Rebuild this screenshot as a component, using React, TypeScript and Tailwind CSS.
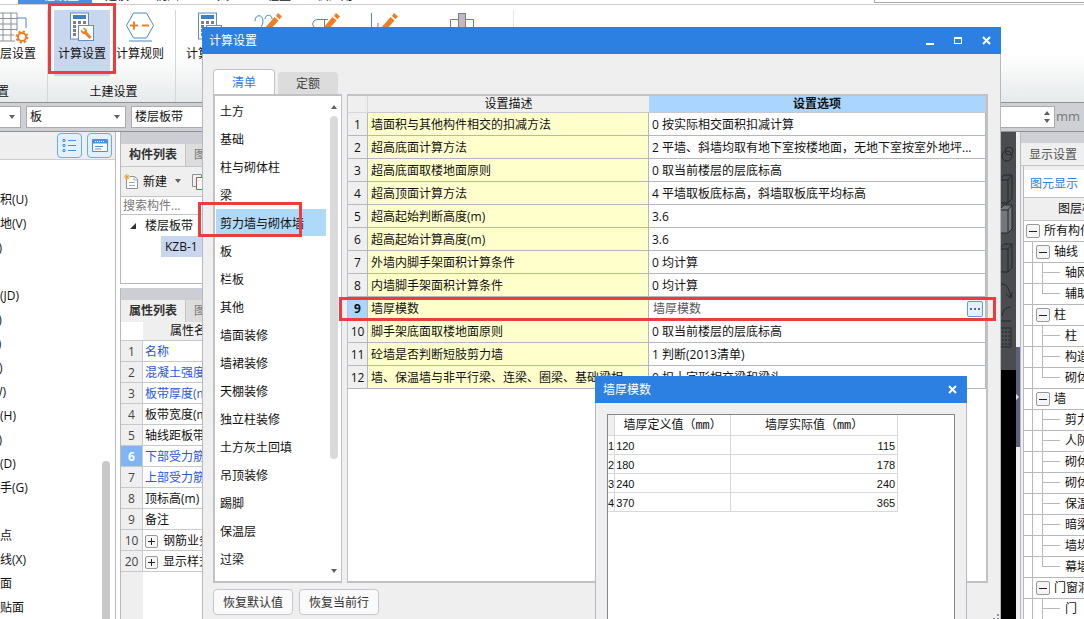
import React from 'react';

const RIBBON_TABS = ['工程设置', '建模', '视图', '工具', '工程量', '云应用'];

const COMMANDS = [
  '面积(U)', '场地(V)', '(Z)', '', '桥(JD)', '(T)', '(L)', '(C)', '(W)', '架(H)',
  '(Z)', '盖(D)', '扶手(G)', '', '＿点', '＿线(X)', '＿面', '＿贴面',
];

const PROPERTIES = [
  { no: 1, name: '名称', blue: true },
  { no: 2, name: '混凝土强度等级', blue: true },
  { no: 3, name: '板带厚度(mm)', blue: true },
  { no: 4, name: '板带宽度(mm)' },
  { no: 5, name: '轴线距板带左边线' },
  { no: 6, name: '下部受力筋', blue: true, active: true },
  { no: 7, name: '上部受力筋', blue: true },
  { no: 8, name: '顶标高(m)' },
  { no: 9, name: '备注' },
  { no: 10, name: '钢筋业务属性', group: true },
  { no: 20, name: '显示样式', group: true },
];

const LAYERS = [
  { level: 0, name: '所有构件' },
  { level: 1, name: '轴线' },
  { level: 2, name: '轴网' },
  { level: 2, name: '辅助轴线', last: true },
  { level: 1, name: '柱' },
  { level: 2, name: '柱' },
  { level: 2, name: '构造柱' },
  { level: 2, name: '砌体柱', last: true },
  { level: 1, name: '墙' },
  { level: 2, name: '剪力墙' },
  { level: 2, name: '人防门框墙' },
  { level: 2, name: '砌体墙' },
  { level: 2, name: '砌体加筋' },
  { level: 2, name: '保温墙' },
  { level: 2, name: '暗梁' },
  { level: 2, name: '墙垛' },
  { level: 2, name: '幕墙', last: true },
  { level: 1, name: '门窗洞' },
  { level: 2, name: '门' },
];

const CATEGORIES = [
  '土方', '基础', '柱与砌体柱', '梁', '剪力墙与砌体墙', '板', '栏板', '其他', '墙面装修',
  '墙裙装修', '天棚装修', '独立柱装修', '土方灰土回填', '吊顶装修', '踢脚', '保温层', '过梁',
];

const SETTINGS = [
  ['墙面积与其他构件相交的扣减方法', '0 按实际相交面积扣减计算'],
  ['超高底面计算方法', '2 平墙、斜墙均取有地下室按楼地面，无地下室按室外地坪...'],
  ['超高底面取楼地面原则', '0 取当前楼层的层底标高'],
  ['超高顶面计算方法', '4 平墙取板底标高，斜墙取板底平均标高'],
  ['超高起始判断高度(m)', '3.6'],
  ['超高起始计算高度(m)', '3.6'],
  ['外墙内脚手架面积计算条件', '0 均计算'],
  ['内墙脚手架面积计算条件', '0 均计算'],
  ['墙厚模数', '墙厚模数'],
  ['脚手架底面取楼地面原则', '0 取当前楼层的层底标高'],
  ['砼墙是否判断短肢剪力墙', '1 判断(2013清单)'],
  ['墙、保温墙与非平行梁、连梁、圈梁、基础梁相', '0 扣十字形相交梁和梁头'],
];

const MODULES = [[120, 115], [180, 178], [240, 240], [370, 365]];

const Calculator = ({ wrench = false }) => (
  <svg width="26" height="30" viewBox="0 0 26 30" fill="none">
    <rect x="1.5" y="1" width="18" height="26" fill="#fff" stroke="#5b8fca" />
    <rect x="4" y="3" width="13" height="4" fill="#3f7fc6" />
    <g fill="#7c7f84">
      {[9, 13, 17, 21].map(y => [4, 9, 14].map(x => (
        <rect key={`${x}-${y}`} x={x} y={y} width="3" height="3" />
      )))}
    </g>
    <rect x="9.5" y="13.5" width="15" height="15" fill="#fff" stroke="#5b8fca" />
    {wrench && (
      <>
        <path d="m16 20 5.500 6" stroke="#ee8023" strokeWidth="3" />
        <path d="M12 17.500 14.500 20l1.500-1.500L13.700 16c2.500-.5 4.600 1.400 4.300 3.800-.5 2.200-3 3-4.600 1.800-1.300-1-1.800-2.500-1.400-4.100z" fill="#ee8023" />
      </>
    )}
  </svg>
);

const GridGear = () => (
  <svg width="34" height="32" viewBox="0 0 34 32" fill="none">
    <path d="M0 1h22v28H0M0 6.500h22M0 12h22M0 17.500h22M0 23h22M8 1v28M16 1v28" stroke="#8b9096" />
    <path d="M22 6h9v10" stroke="#4a86c8" />
    <circle cx="27" cy="25" r="8" fill="#fff" />
    <circle cx="27" cy="25" r="4" stroke="#ee8023" strokeWidth="2" />
    <circle cx="27" cy="25" r="5.500" stroke="#ee8023" strokeWidth="2" strokeDasharray="2.200 2.120" />
  </svg>
);

const RuleHexagon = () => (
  <svg width="30" height="30" viewBox="0 0 30 30" fill="none">
    <path d="M8.500 1h13l7 12.500-7 12.500h-13L1.500 13.500z" stroke="#4a86c8" />
    <path d="M5 13.500h8M9 9.500v8M17 13.500h7" stroke="#ee8023" strokeWidth="2" />
    <path d="M4 29h23" stroke="#4a86c8" />
  </svg>
);

const Pencil = ({ d }: { d: string }) => (
  <svg width="32" height="30" viewBox="0 0 32 30" fill="none">
    <path d={d} stroke="#4a86c8" />
    <path d="M13 16 22.500 5l4 3.500L18 18l-7 2z" fill="#ee8023" />
    <path d="m24 4 2-3 4 3.500L27.500 7.200z" fill="#ee8023" />
  </svg>
);

const ColumnIcon = () => (
  <svg width="26" height="30" viewBox="0 0 26 30" fill="none">
    <path d="M1.500 24V7.500h23V24" stroke="#4a86c8" />
    <rect x="9.500" y="1.500" width="7" height="26" fill="#b9bcc2" stroke="#7c7f84" />
  </svg>
);

const Arrow = ({ up = false }) => (
  <svg width="8" height="5" viewBox="0 0 8 5" className="shrink-0">
    <path d={up ? 'M1 5h6L4 1z' : 'M1 0h6L4 4z'} fill="#606060" />
  </svg>
);

const CloseIcon = () => (
  <svg width="9" height="9" viewBox="0 0 9 9">
    <path d="m1 1 7 7m0-7-7 7" stroke="#fff" strokeWidth="2" />
  </svg>
);

const RibbonButton = ({ icon, label, active = false }: { icon: React.ReactNode; label?: string; active?: boolean }) => (
  <button className={`flex h-[66px] w-14 shrink-0 flex-col items-center pt-[2px] ${active ? 'bg-[#c8d7ee]' : ''}`}>
    <span className="flex h-8 items-start">{icon}</span>
    <span className="mt-[2px] leading-4 whitespace-nowrap">{label}</span>
  </button>
);

const Combo = ({ label, value, className }: { label: string; value: string; className: string }) => (
  <div className={`flex h-[22px] shrink-0 items-center border border-[#aaabb0] bg-white pr-1 ${className}`}>
    <select aria-label={label} className="h-5 min-w-0 flex-1 appearance-none bg-transparent pl-[3px] outline-none">
      <option>{value}</option>
    </select>
    <Arrow />
  </div>
);

const Ribbon = () => (
  <>
    <nav className="flex h-[5px] shrink-0 items-end overflow-hidden border-b border-[#cfcfcf] bg-white pl-[18px]">
      {RIBBON_TABS.map((tab, i) => (
        <a key={tab} href="#" className={`px-[13px] leading-4 whitespace-nowrap ${i === 0 ? 'bg-[#4a90e2] text-white' : ''}`}>
          {tab}
        </a>
      ))}
      <span className="mb-px ml-auto h-[3px] w-[210px] border-b border-l border-[#aaa]"></span>
    </nav>

    <div className="flex h-[98px] shrink-0 overflow-hidden border-b border-[#8f9194] bg-linear-to-b from-white from-50% to-[#e6eaea] pt-[5px]">
      <section className="flex w-12 shrink-0 flex-col items-end border-r border-[#d4d6d8] pr-[7px]">
        <RibbonButton icon={<GridGear />} label="楼层设置" />
        <h2 className="mt-2 mr-auto -ml-[3px] leading-4">置</h2>
      </section>
      <section className="flex w-32 shrink-0 flex-col border-r border-[#d4d6d8]">
        <div className="flex gap-[2px] pl-[6px]">
          <RibbonButton icon={<Calculator wrench />} label="计算设置" active />
          <RibbonButton icon={<RuleHexagon />} label="计算规则" />
        </div>
        <h2 className="mt-2 pl-1 text-center leading-4">土建设置</h2>
      </section>
      <section className="flex w-[338px] shrink-0 gap-[2px] border-r border-[#e4e4e4] pl-[6px]">
        <RibbonButton icon={<Calculator />} label="计算设置" />
        <RibbonButton icon={<Pencil d="M3 9c0-7 8-7 8 0 0 6-5 8-8 12M13 7c0-5 7-5 7 0" />} />
        <RibbonButton icon={<Pencil d="M18 7.500H8c-7 0-7 9 0 9h4M14.500 7v8" />} />
        <RibbonButton icon={<Pencil d="M3.500 1v24h20M10 11v7h7" />} />
        <span className="pl-5"><RibbonButton icon={<ColumnIcon />} /></span>
      </section>
    </div>

    <div className="flex h-[29px] shrink-0 items-center gap-[5px] overflow-hidden border-b border-[#8f9194] bg-[#cfd0d4]">
      <Combo label="楼层" value="" className="w-[21px] border-l-0" />
      <Combo label="构件类型" value="板" className="w-[100px]" />
      <Combo label="构件" value="楼层板带" className="w-[100px]" />
      <label className="ml-auto flex items-center gap-px pr-1 text-[13px] text-[#77787c]">
        <span className="flex h-[22px] items-center border border-[#aaabb0] bg-white pr-[3px]">
          <input defaultValue="0" className="w-[68px] pl-4 outline-none" />
          <span className="flex flex-col gap-1"><Arrow up /><Arrow /></span>
        </span>
        mm
      </label>
    </div>
  </>
);

const PanelTabs = ({ title, other }: { title: string; other: string }) => (
  <>
    <div className="h-3 shrink-0 bg-[#cdced4]"></div>
    <div className="flex h-[22px] shrink-0 bg-[#dcdcdc]">
      <button className="w-[65px] border-r border-[#c4c4c4] bg-[#efefef] font-bold text-[#333]">{title}</button>
      <button className="px-2 text-[#777]">{other}</button>
    </div>
  </>
);

const CommandPanel = () => (
  <aside className="flex w-[116px] shrink-0 flex-col border-r border-[#b8b9be] bg-white">
    <div className="flex h-7 shrink-0 items-center justify-end gap-[5px] border-b border-[#d0d0d0] bg-[#efefef] pr-[3px]">
      <button aria-label="列表" className="flex size-[25px] items-center justify-center rounded border border-[#6aaaf0] bg-[#e3f1fe]">
        <svg width="15" height="15" viewBox="0 0 15 15" fill="none" stroke="#4a90e2">
          <path d="M1 1.500h2v2H1zM1 6.500h2v2H1zM1 11.500h2v2H1zM6 2.500h8M6 7.500h8M6 12.500h8" />
        </svg>
      </button>
      <button aria-label="窗口" className="flex size-[25px] items-center justify-center rounded border border-[#6aaaf0] bg-[#e3f1fe]">
        <svg width="16" height="15" viewBox="0 0 16 15" fill="none" stroke="#4a90e2">
          <path d="M.5 1.500h15v12H.5z" fill="#fff" />
          <path d="M1 3.500h14" strokeWidth="4" />
          <path d="M3 3.500h5m1 0h1m1 0h2" stroke="#fff" strokeDasharray="1 1" />
          <path d="M3 8.500h8M3 11h6" />
        </svg>
      </button>
    </div>
    <div className="flex min-h-0 flex-1 overflow-hidden">
      <ul className="-ml-3 flex-1 pt-7">
        {COMMANDS.map((name, i) => (
          <li key={i} className="h-6 leading-6 whitespace-nowrap">{name}</li>
        ))}
      </ul>
      <span className="mt-[301px] mr-[5px] w-2 rounded-t bg-[#c8c8c8]"></span>
    </div>
  </aside>
);

const ComponentPanel = () => (
  <aside className="ml-1 flex w-[242px] shrink-0 flex-col">
    <section className="flex h-[152px] shrink-0 flex-col border-b border-l border-[#b8b9be] bg-white">
      <PanelTabs title="构件列表" other="图纸管理" />
      <div className="flex h-[30px] shrink-0 items-center border-t border-[#c4c4c4] bg-[#efefef] pl-[3px]">
        <button className="flex items-center gap-1">
          <svg width="15" height="16" viewBox="0 0 15 16" fill="none">
            <path d="M2.500 4.500v10h11V5l-3-2.500H6" fill="#fff" stroke="#8b9096" />
            <path d="M10 2.500V6h4M5 8.500h6M5 11.500h6" stroke="#a9adb3" />
            <path d="M3 0v6M0 3h6M1 1l4 4m0-4L1 5" stroke="#e8a22b" />
          </svg>
          新建
          <span className="ml-[3px]"><Arrow /></span>
        </button>
        <button aria-label="复制" className="ml-[10px]">
          <svg width="14" height="16" viewBox="0 0 14 16" fill="none">
            <path d="M4 12.500H.5V.5h9V3" stroke="#8b9096" />
            <path d="M4.500 3.500h9v12h-9z" fill="#fff" stroke="#c0504d" />
          </svg>
        </button>
      </div>
      <input aria-label="搜索构件" placeholder="搜索构件..." className="h-[19px] shrink-0 border-y border-[#c4c4c4] pl-[2px] outline-none placeholder:text-[#777]" />
      <ul className="leading-[21px]">
        <li className="flex items-center gap-2 pl-2">
          <svg width="8" height="8" viewBox="0 0 8 8"><path d="M7 1v6H1z" fill="#333" /></svg>
          楼层板带
        </li>
        <li className="ml-10 bg-[#c8d7ee] pl-1">KZB-1</li>
      </ul>
    </section>

    <section className="mt-1 flex min-h-0 flex-1 flex-col border-l border-[#b8b9be] bg-white">
      <PanelTabs title="属性列表" other="图层管理" />
      <div className="flex-1 bg-linear-to-r from-[#efefef] from-[22px] to-white to-[22px]">
        <table className="w-full table-fixed border-separate border-spacing-0">
          <colgroup>
            <col className="w-[22px]" />
            <col className="w-[102px]" />
            <col />
          </colgroup>
          <thead>
            <tr>
              <th className="h-[19px] border-b border-[#c8c9ce] bg-white"></th>
              <th className="border-b border-[#c8c9ce] bg-[#efefef] font-normal">属性名称</th>
              <th className="border-b border-[#c8c9ce] bg-[#efefef] font-normal">属性值</th>
            </tr>
          </thead>
          <tbody>
            {PROPERTIES.map(p => (
              <tr key={p.no}>
                <td className={`h-[21px] border-r border-b border-[#c8c9ce] pt-[2px] text-center leading-4 ${p.active ? 'bg-[#7db5f5] font-bold text-white' : 'bg-[#efefef] text-[#444]'}`}>{p.no}</td>
                <td className={`overflow-hidden border-r border-b border-[#c8c9ce] pt-[2px] pl-[2px] leading-4 whitespace-nowrap ${p.blue ? 'text-[#2b55dd]' : ''}`}>
                  {p.group && (
                    <button aria-label="展开" className="mr-[5px] inline-flex size-[13px] items-center justify-center rounded-xs border border-[#999] bg-[#f5f5f5] align-middle">
                      <svg width="7" height="7" viewBox="0 0 7 7"><path d="M0 3.500h7M3.500 0v7" stroke="#222" /></svg>
                    </button>
                  )}
                  {p.name}
                </td>
                <td className="border-b border-[#c8c9ce]"></td>
              </tr>
            ))}
          </tbody>
        </table>
      </div>
    </section>
  </aside>
);

const Viewport = () => (
  <main className="flex min-w-0 flex-1 justify-end bg-black">
    <div className="flex h-[238px] w-6 items-start justify-end bg-[#4b4c4f]">
      <svg width="18" height="230" viewBox="0 0 18 230" fill="none" stroke="#25282c">
        <circle cx="9" cy="24" r="5" />
        <circle cx="11" cy="19" r="4" />
        <path d="M1 48 6 43h8v24l-4 4H1zM1 48h9v23M10 48l4-5" />
        <path d="M1 78 6 73h8v24l-4 4H1z" fill="#74777b" />
        <path d="M1 78h9v23M10 78l4-5" />
        <path d="M1 117l5-5h8v24l-4 4H1zM1 117h9v23M10 117l4-5" />
        <path d="M3 152c6 0 8 4 10 14m-5-4 5 4 1-6M4 184c1-6 4-9 9-9M1 189h12M2 196h11v19H2z" />
        <path d="M4 200h8M4 204h8M4 208h8M4 212h8" strokeDasharray="2 1" />
      </svg>
    </div>
  </main>
);

const LayerRow = ({ row }: { row: { level: number; name: string; last?: boolean } }) => (
  <li className="flex h-[21px] items-center overflow-hidden border-b border-[#b8b9be] whitespace-nowrap">
    {row.level < 2 ? (
      <>
        {row.level === 1 && <span className="ml-2 h-full w-1 shrink-0 border-l border-[#b8b9be]"></span>}
        <button aria-label="折叠" className={`mr-1 flex size-[14px] shrink-0 items-center justify-center rounded-xs border border-[#999] bg-[#f5f5f5] ${row.level === 0 ? 'ml-[2px]' : ''}`}>
          <span className="h-px w-2 bg-[#222]"></span>
        </button>
      </>
    ) : (
      <>
        <span className="ml-2 h-full w-[10px] shrink-0 border-l border-[#b8b9be]"></span>
        <span className="flex h-full w-[18px] shrink-0 flex-col">
          <span className="h-[10px] border-b border-l border-[#b8b9be]"></span>
          <span className={`flex-1 ${row.last ? '' : 'border-l border-[#b8b9be]'}`}></span>
        </span>
        <span className="w-[5px] shrink-0"></span>
      </>
    )}
    {row.name}
  </li>
);

const DisplayPanel = () => (
  <aside className="flex w-[68px] shrink-0 bg-[#efefef]">
    <div className="w-1 shrink-0 pt-[215px]">
      <button aria-label="收起面板" className="flex h-[100px] w-1 items-center bg-[#5c627a]">
        <svg width="4" height="8" viewBox="0 0 4 8"><path d="M0 1v6l3-3z" fill="#dfe2ee" /></svg>
      </button>
    </div>
    <div className="flex min-w-0 flex-1 flex-col overflow-hidden border-l border-[#b8b9be] whitespace-nowrap">
      <div className="h-[11px] shrink-0 bg-[#cfd0d6]"></div>
      <h2 className="h-[23px] shrink-0 border-b border-[#c4c4c4] pl-2 leading-[23px] text-[#555]">显示设置</h2>
      <div className="ml-[2px] flex min-h-0 flex-1 flex-col border-l border-[#b8b9be] bg-white">
        <div className="flex h-[31px] shrink-0 items-end bg-[#efefef]">
          <button className="h-[27px] bg-white px-[6px] text-[#2b80e2]">图元显示</button>
        </div>
        <h3 className="h-6 shrink-0 border-y border-[#c4c4c4] bg-[#efefef] pl-[34px] leading-[22px]">图层构件</h3>
        <ul>
          {LAYERS.map((row, i) => <LayerRow key={i} row={row} />)}
        </ul>
      </div>
    </div>
  </aside>
);

const SettingsTable = () => (
  <table className="w-full table-fixed border-separate border-spacing-0">
    <colgroup>
      <col className="w-5" />
      <col className="w-[281px]" />
      <col />
    </colgroup>
    <thead>
      <tr className="leading-4">
        <th className="h-[17px] border-r border-b border-[#d6d7da] bg-[#efefef]"></th>
        <th className="border-b border-[#c8c9ce] bg-[#efefef] font-normal">设置描述</th>
        <th className="border-r border-b border-[#c8c9ce] bg-[#aad5ff] font-bold">设置选项</th>
      </tr>
    </thead>
    <tbody>
      {SETTINGS.map(([name, value], i) => {
        const active = i === 8;
        return (
          <tr key={name} className="leading-4 whitespace-nowrap">
            <td className={`h-[23px] border-r border-b border-[#b4b8bd] pt-[2px] text-center ${active ? 'bg-[#aad5ff] font-bold' : 'bg-[#efefef]'}`}>{i + 1}</td>
            <td className="overflow-hidden border-r border-b border-[#b4b8bd] bg-[#ffffcc] pt-[2px] pl-[3px]">{name}</td>
            <td className="overflow-hidden border-r border-b border-[#b4b8bd] pt-[2px] pl-[3px]">
              {active ? (
                <div className="flex items-center justify-between pr-[2px] pl-px text-[#555]">
                  {value}
                  <button aria-label="编辑墙厚模数" className="flex h-4 w-4 items-center justify-center gap-[2px] rounded-xs border border-[#5a9be6] bg-[#e3f1fe]">
                    <span className="size-[2px] bg-[#667]"></span>
                    <span className="size-[2px] bg-[#667]"></span>
                    <span className="size-[2px] bg-[#667]"></span>
                  </button>
                </div>
              ) : value}
            </td>
          </tr>
        );
      })}
    </tbody>
  </table>
);

const SettingsDialog = () => (
  <div role="dialog" className="absolute top-[27px] right-[83px] bottom-0 left-[202px] flex flex-col bg-[#efefef]">
    <header className="flex h-[27px] shrink-0 items-center bg-[#2b80e2] pr-[10px] pl-[7px] text-white">
      <h1 className="mr-auto">计算设置</h1>
      <div className="flex items-center gap-5">
        <button aria-label="最小化" className="flex h-2 w-2 items-end"><span className="h-[2px] w-2 bg-white"></span></button>
        <button aria-label="最大化" className="h-[7px] w-2 border border-t-2 border-white"></button>
        <button aria-label="关闭"><CloseIcon /></button>
      </div>
    </header>

    <div className="flex min-h-0 flex-1 flex-col border-x border-[#b4b8c0] px-[10px] pt-[15px] pb-1">
      <div className="flex h-[25px] shrink-0 items-end gap-[3px]">
        <button className="h-[25px] w-[62px] rounded-t border border-b-0 border-[#c0c2c8] bg-white pt-[2px] text-[#2b80e2]">清单</button>
        <button className="h-[22px] w-[60px] rounded-t bg-[#dcdcdc] pt-[2px] text-[#444]">定额</button>
      </div>

      <div className="mr-[2px] flex min-h-0 flex-1 gap-[5px]">
        <div className="flex w-[129px] shrink-0 border-2 border-r border-[#c0c2c8] bg-white">
          <ul className="min-w-0 flex-1 pt-px pl-px">
            {CATEGORIES.map(name => (
              <li key={name} className="h-7">
                <button className={`h-[27px] w-[110px] pt-[2px] pl-1 text-left whitespace-nowrap ${name === '剪力墙与砌体墙' ? 'bg-[#afd9f8]' : ''}`}>{name}</button>
              </li>
            ))}
          </ul>
          <div className="flex w-[15px] shrink-0 flex-col items-center pt-2 pb-[7px]">
            <Arrow up />
            <span className="mt-[7px] h-[343px] w-2 rounded bg-[#dadada]"></span>
            <span className="mt-auto"><Arrow /></span>
          </div>
        </div>
        <div className="min-w-0 flex-1 border-2 border-l border-[#c0c2c8] bg-white">
          <SettingsTable />
        </div>
      </div>

      <div className="mt-[6px] flex shrink-0 items-end gap-[6px]">
        <button className="h-[26px] w-20 rounded-sm border border-[#c4c7cc] bg-[#fafafa] pt-[2px] text-[#333]">恢复默认值</button>
        <button className="h-[26px] w-20 rounded-sm border border-[#c4c7cc] bg-[#fafafa] pt-[2px] text-[#333]">恢复当前行</button>
      </div>
    </div>
    <svg width="8" height="5" viewBox="0 0 8 5" className="absolute right-px bottom-0">
      <path d="M5 0h2v2H5zM1 4h2v1H1zM5 4h2v1H5z" fill="#8f9194" />
    </svg>
  </div>
);

const ModuleDialog = () => (
  <div role="dialog" className="absolute top-[376px] right-[117px] bottom-0 left-[595px] flex flex-col bg-[#efefef]">
    <header className="flex h-[27px] shrink-0 items-center justify-between bg-[#2b80e2] pr-[10px] pl-2 text-white">
      <h2>墙厚模数</h2>
      <button aria-label="关闭"><CloseIcon /></button>
    </header>
    <div className="flex min-h-0 flex-1 border-x border-[#b4b8c0] px-[11px] pt-[11px]">
      <div className="flex-1 border border-b-0 border-[#828790] bg-white">
        <table className="table-fixed border-separate border-spacing-0 font-['Liberation_Sans','Noto_Sans_CJK_SC',sans-serif] text-[11px] leading-4">
          <colgroup>
            <col className="w-[7px]" />
            <col className="w-[116px]" />
            <col className="w-[167px]" />
          </colgroup>
          <thead className="font-['Liberation_Mono','Noto_Sans_CJK_SC',monospace] text-xs leading-4">
            <tr>
              <th className="h-[21px] border-r border-b border-[#d8d8d8] bg-[#efefef]"></th>
              <th className="border-r border-b border-[#d8d8d8] pt-[2px] font-normal">墙厚定义值（mm）</th>
              <th className="border-r border-b border-[#d8d8d8] pt-[2px] font-normal">墙厚实际值（mm）</th>
            </tr>
          </thead>
          <tbody>
            {MODULES.map(([defined, actual], i) => (
              <tr key={defined}>
                <td className="h-[19px] border-r border-b border-[#d8d8d8] pt-[2px]">{i + 1}</td>
                <td className="border-r border-b border-[#d8d8d8] pt-[2px] pl-px">{defined}</td>
                <td className="border-r border-b border-[#d8d8d8] pt-[2px] pr-[2px] text-right">{actual}</td>
              </tr>
            ))}
          </tbody>
        </table>
      </div>
    </div>
  </div>
);

const App = () => (
  <div className="relative flex h-screen flex-col overflow-hidden bg-white font-['Open_Sans','Noto_Sans_CJK_SC',sans-serif] text-xs text-[#111]">
    <Ribbon />
    <div className="flex min-h-0 flex-1">
      <CommandPanel />
      <ComponentPanel />
      <Viewport />
      <DisplayPanel />
    </div>

    <SettingsDialog />
    <ModuleDialog />

    {/* Highlight frames */}
    <div className="pointer-events-none absolute top-[3px] left-12 h-[71px] w-[68px] border-3 border-[#ee3b3e]"></div>
    <div className="pointer-events-none absolute top-[202px] left-[198px] h-[35px] w-[104px] border-3 border-[#ee3b3e]"></div>
    <div className="pointer-events-none absolute top-[297px] right-[88px] left-[339px] h-6 border-3 border-[#ee3b3e]"></div>
  </div>
);

export default App;
